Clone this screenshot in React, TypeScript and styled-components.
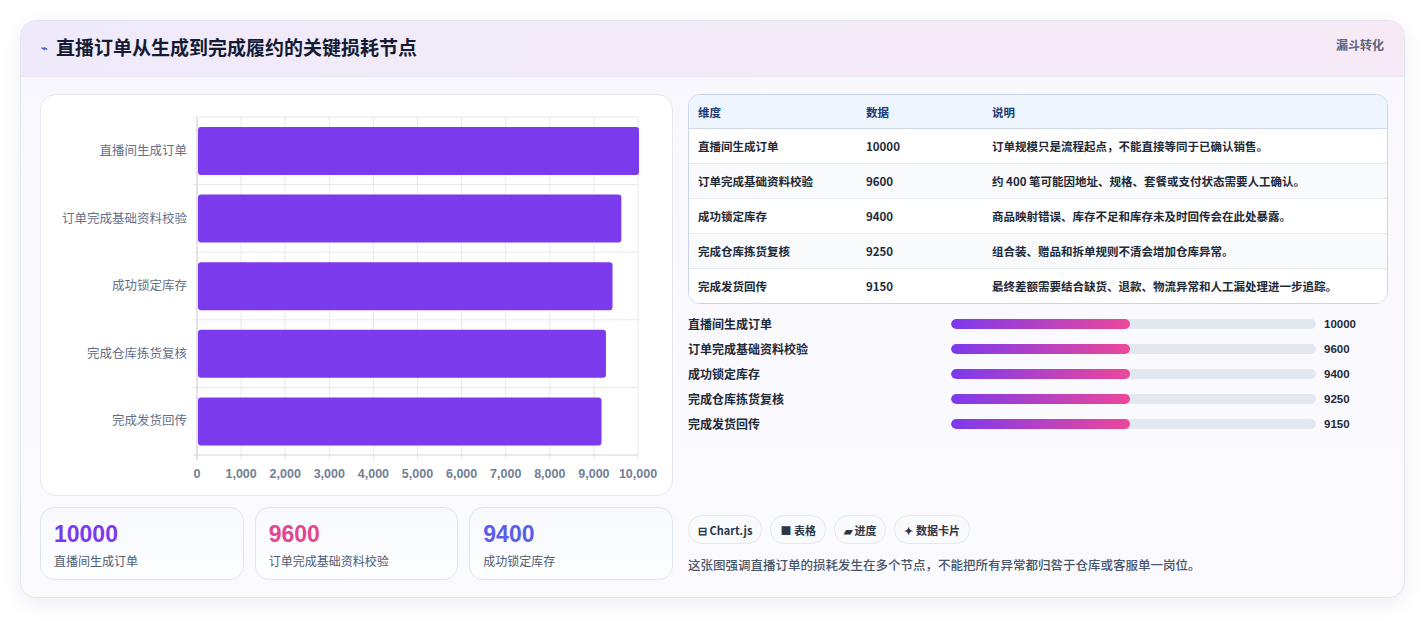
import React from "react";
import styled, { createGlobalStyle } from "styled-components";

const G = createGlobalStyle`
  html,body{margin:0;padding:0;background:#fff;}
  body{font-family:"Noto Sans CJK SC","Noto Sans",sans-serif;}
`;

const rows = [
  { n: "直播间生成订单", v: 10000, d: "订单规模只是流程起点，不能直接等同于已确认销售。" },
  { n: "订单完成基础资料校验", v: 9600, d: "约 400 笔可能因地址、规格、套餐或支付状态需要人工确认。" },
  { n: "成功锁定库存", v: 9400, d: "商品映射错误、库存不足和库存未及时回传会在此处暴露。" },
  { n: "完成仓库拣货复核", v: 9250, d: "组合装、赠品和拆单规则不清会增加仓库异常。" },
  { n: "完成发货回传", v: 9150, d: "最终差额需要结合缺货、退款、物流异常和人工漏处理进一步追踪。" },
];

const Page = styled.div`padding:20px 21px 22px 20px;`;
const Card = styled.div`
  border:1px solid #e2e6f0;border-radius:16px;overflow:hidden;
  background:linear-gradient(180deg,#f7f7fd,#fbfbff);
  box-shadow:0 6px 20px rgba(30,40,80,0.08);
`;
const Header = styled.div`
  height:55px;display:flex;align-items:center;justify-content:space-between;
  padding:0 20px;border-bottom:1px solid #ebe8f5;
  background:linear-gradient(90deg,#efeafb,#f7eaf6);
`;
const Title = styled.h1`
  margin:0;font-size:19px;font-weight:700;color:#141b33;display:flex;align-items:center;gap:8px;
  margin-top:-4px;
`;
const Spark = styled.span`color:#4a5bd6;font-size:11px;`;
const Tag = styled.span`font-size:12px;font-weight:700;color:#5d6680;align-self:flex-start;margin-top:15px;`;
const Body = styled.div`display:grid;grid-template-columns:633px 700px;gap:15px;padding:17px 18px 17px 19px;`;
const Col = styled.div`display:flex;flex-direction:column;`;
const ChartBox = styled.div`
  height:402px;border:1px solid #e3e8f1;border-radius:16px;background:#fff;box-sizing:border-box;
`;
const Stats = styled.div`display:grid;grid-template-columns:repeat(3,1fr);gap:11px;margin-top:11px;`;
const Stat = styled.div`
  height:73px;border:1px solid #dce6f3;border-radius:14px;box-sizing:border-box;padding:12px 13px;
  background:linear-gradient(180deg,#f8f9fe,#fdfeff);
`;
const StatNum = styled.div<{ c: string }>`font-family:"Liberation Sans",sans-serif;font-weight:700;font-size:23px;color:${p => p.c};line-height:28px;`;
const StatLbl = styled.div`font-size:12px;color:#4f5b70;margin-top:4px;`;

const TableWrap = styled.div`border:1px solid #ccd6e6;border-radius:12px;overflow:hidden;background:#fff;`;
const Table = styled.table`width:100%;border-collapse:collapse;font-size:11.5px;`;
const Th = styled.th`
  text-align:left;font-weight:700;color:#1e3a72;background:#eef5ff;height:33px;padding:0 9px;
  border-bottom:1px solid #cfd8e6;
`;
const Td = styled.td<{ b?: boolean }>`
  height:34px;padding:0 9px;color:#1f2937;font-weight:${p => (p.b ? 600 : 500)};border-top:1px solid #e5e9f0;
`;
const Tr = styled.tr<{ alt: boolean }>`background:${p => (p.alt ? "#f8fafc" : "#fff")};`;

const Bars = styled.div`display:flex;flex-direction:column;gap:8px;margin-top:11px;`;
const BarRow = styled.div`display:grid;grid-template-columns:263px 365px 1fr;align-items:center;height:17px;font-size:12px;color:#1f2937;font-weight:600;`;
const Track = styled.div`height:10px;border-radius:5px;background:#e3e8f0;overflow:hidden;`;
const Fill = styled.div`height:100%;border-radius:5px;background:linear-gradient(90deg,#7c3aed,#ec4899);`;
const Val = styled.span`padding-left:8px;font-family:"Liberation Sans",sans-serif;font-weight:700;font-size:11.5px;`;

const Chips = styled.div`display:flex;gap:8px;margin-top:auto;`;
const Chip = styled.span`
  height:27px;padding:0 9px;border:1px solid #e3e7ee;border-radius:14px;background:#f8fafc;
  display:flex;align-items:center;gap:4px;font-size:11px;font-weight:700;color:#2d3748;
`;
const Note = styled.p`margin:11px 0 6px;font-size:12.5px;color:#4a5568;font-weight:500;`;

function Chart() {
  const x0 = 156, w = 441, top = 22, rh = 67.6;
  const ticks = Array.from({ length: 11 }, (_, i) => i);
  return (
    <svg width="631" height="400" style={{ display: "block" }}>
      {ticks.map(i => (
        <line key={i} x1={x0 + (w * i) / 10} x2={x0 + (w * i) / 10} y1={top} y2={top + rh * 5 + 5} stroke="#e6e8ee" />
      ))}
      {[0, 1, 2, 3, 4, 5].map(i => (
        <line key={i} x1={x0 - 4} x2={x0 + w} y1={top + rh * i} y2={top + rh * i} stroke={i === 5 ? "#cfd3db" : "#e6e8ee"} />
      ))}
      <line x1={x0} x2={x0} y1={top} y2={top + rh * 5 + 5} stroke="#cfd3db" />
      {rows.map((r, i) => (
        <g key={r.n}>
          <rect x={x0 + 1} y={top + rh * i + 10} width={(w * r.v) / 10000} height={48} rx={3} fill="#7c3aed" />
          <text x={x0 - 10} y={top + rh * i + 38} textAnchor="end" fontSize="12.5" fill="#64708a" fontFamily="Noto Sans CJK SC">{r.n}</text>
        </g>
      ))}
      {ticks.map(i => (
        <text key={i} x={x0 + (w * i) / 10} y={383} textAnchor="middle" fontSize="12.5" fontWeight="700" fill="#718096" fontFamily="Liberation Sans, sans-serif">
          {(i * 1000).toLocaleString("en-US")}
        </text>
      ))}
    </svg>
  );
}

export default function App() {
  return (
    <Page>
      <G />
      <Card>
        <Header>
          <Title><Spark>⌁</Spark>直播订单从生成到完成履约的关键损耗节点</Title>
          <Tag>漏斗转化</Tag>
        </Header>
        <Body>
          <Col>
            <ChartBox><Chart /></ChartBox>
            <Stats>
              <Stat><StatNum c="#7c3aed">10000</StatNum><StatLbl>直播间生成订单</StatLbl></Stat>
              <Stat><StatNum c="#e2468f">9600</StatNum><StatLbl>订单完成基础资料校验</StatLbl></Stat>
              <Stat><StatNum c="#5b5ee6">9400</StatNum><StatLbl>成功锁定库存</StatLbl></Stat>
            </Stats>
          </Col>
          <Col>
            <TableWrap>
              <Table>
                <thead><tr><Th style={{ width: 150 }}>维度</Th><Th style={{ width: 108 }}>数据</Th><Th>说明</Th></tr></thead>
                <tbody>
                  {rows.map((r, i) => (
                    <Tr key={r.n} alt={i % 2 === 1}>
                      <Td b>{r.n}</Td><Td b>{r.v}</Td><Td b>{r.d}</Td>
                    </Tr>
                  ))}
                </tbody>
              </Table>
            </TableWrap>
            <Bars>
              {rows.map(r => (
                <BarRow key={r.n}>
                  <span>{r.n}</span>
                  <Track><Fill style={{ width: "49%" }} /></Track>
                  <Val>{r.v}</Val>
                </BarRow>
              ))}
            </Bars>
            <Chips>
              <Chip>⊟ Chart.js</Chip>
              <Chip>■ 表格</Chip>
              <Chip>▰ 进度</Chip>
              <Chip>✦ 数据卡片</Chip>
            </Chips>
            <Note>这张图强调直播订单的损耗发生在多个节点，不能把所有异常都归咎于仓库或客服单一岗位。</Note>
          </Col>
        </Body>
      </Card>
    </Page>
  );
}
